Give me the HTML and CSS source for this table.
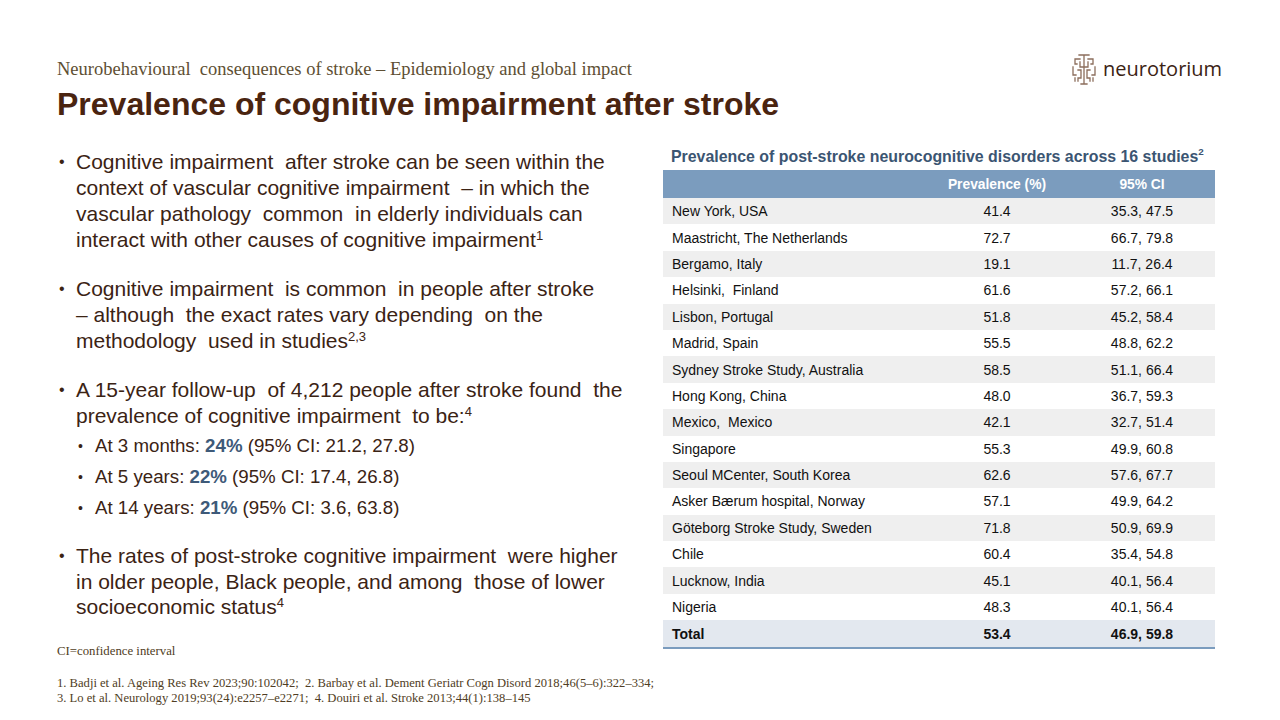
FILE: index.html
```html
<!DOCTYPE html>
<html>
<head>
<meta charset="utf-8">
<link rel="stylesheet" href="styles.css">
</head>
<body>
<div class="slide">
  <header class="header">
    <div class="kicker">Neurobehavioural&nbsp; consequences of stroke – Epidemiology and global impact</div>
    <h1 class="title">Prevalence of cognitive impairment after stroke</h1>
    <div class="logo">
      <svg class="logo-icon" viewBox="0 0 26 32" width="26" height="32">
        <g fill="none" stroke="#8c6e5c" stroke-width="1.3" stroke-linecap="square">
          <path d="M8 2 H18 M13 2 V31 M10 31 H16"/>
          <path d="M9 6 H4 V11 H6 M17 6 H22 V11 H20"/>
          <path d="M9 9 V14 H13 M17 9 V14 H13"/>
          <path d="M2 14 V22 H5 M24 14 V22 H21"/>
          <path d="M7 17 H10 V25 H7 V28 M19 17 H16 V25 H19 V28"/>
          <path d="M4 25 V28 M22 25 V28"/>
        </g>
      </svg>
      <span class="logo-text">neurotorium</span>
    </div>
  </header>

  <main class="content">
    <section class="left">
      <ul class="bullets">
        <li>Cognitive impairment&nbsp; after stroke can be seen within the<br>context of vascular cognitive impairment&nbsp; – in which the<br>vascular pathology&nbsp; common&nbsp; in elderly individuals can<br>interact with other causes of cognitive impairment<sup>1</sup></li>
        <li>Cognitive impairment&nbsp; is common&nbsp; in people after stroke<br>– although&nbsp; the exact rates vary depending&nbsp; on the<br>methodology&nbsp; used in studies<sup>2,3</sup></li>
        <li>A 15-year follow-up&nbsp; of 4,212 people after stroke found&nbsp; the<br>prevalence of cognitive impairment&nbsp; to be:<sup>4</sup>
          <ul class="sub">
            <li>At 3 months: <b>24%</b> (95% CI: 21.2, 27.8)</li>
            <li>At 5 years: <b>22%</b> (95% CI: 17.4, 26.8)</li>
            <li>At 14 years: <b>21%</b> (95% CI: 3.6, 63.8)</li>
          </ul>
        </li>
        <li class="last">The rates of post-stroke cognitive impairment&nbsp; were higher<br>in older people, Black people, and among&nbsp; those of lower<br>socioeconomic status<sup>4</sup></li>
      </ul>
      <div class="abbr">CI=confidence interval</div>
      <div class="refs">1. Badji et al. Ageing Res Rev 2023;90:102042;&nbsp; 2. Barbay et al. Dement Geriatr Cogn Disord 2018;46(5–6):322–334;<br>3. Lo et al. Neurology 2019;93(24):e2257–e2271;&nbsp; 4. Douiri et al. Stroke 2013;44(1):138–145</div>
    </section>

    <section class="right">
      <div class="table-title">Prevalence of post-stroke neurocognitive disorders across 16 studies<sup>2</sup></div>
      <table class="data">
        <thead>
          <tr><th class="c1"></th><th class="c2">Prevalence (%)</th><th class="c3">95% CI</th></tr>
        </thead>
        <tbody>
          <tr><td class="c1">New York, USA</td><td>41.4</td><td>35.3, 47.5</td></tr>
          <tr><td class="c1">Maastricht, The Netherlands</td><td>72.7</td><td>66.7, 79.8</td></tr>
          <tr><td class="c1">Bergamo, Italy</td><td>19.1</td><td>11.7, 26.4</td></tr>
          <tr><td class="c1">Helsinki,&nbsp; Finland</td><td>61.6</td><td>57.2, 66.1</td></tr>
          <tr><td class="c1">Lisbon, Portugal</td><td>51.8</td><td>45.2, 58.4</td></tr>
          <tr><td class="c1">Madrid, Spain</td><td>55.5</td><td>48.8, 62.2</td></tr>
          <tr><td class="c1">Sydney Stroke Study, Australia</td><td>58.5</td><td>51.1, 66.4</td></tr>
          <tr><td class="c1">Hong Kong, China</td><td>48.0</td><td>36.7, 59.3</td></tr>
          <tr><td class="c1">Mexico,&nbsp; Mexico</td><td>42.1</td><td>32.7, 51.4</td></tr>
          <tr><td class="c1">Singapore</td><td>55.3</td><td>49.9, 60.8</td></tr>
          <tr><td class="c1">Seoul MCenter, South Korea</td><td>62.6</td><td>57.6, 67.7</td></tr>
          <tr><td class="c1">Asker Bærum hospital, Norway</td><td>57.1</td><td>49.9, 64.2</td></tr>
          <tr><td class="c1">Göteborg Stroke Study, Sweden</td><td>71.8</td><td>50.9, 69.9</td></tr>
          <tr><td class="c1">Chile</td><td>60.4</td><td>35.4, 54.8</td></tr>
          <tr><td class="c1">Lucknow, India</td><td>45.1</td><td>40.1, 56.4</td></tr>
          <tr><td class="c1">Nigeria</td><td>48.3</td><td>40.1, 56.4</td></tr>
          <tr class="total"><td class="c1">Total</td><td>53.4</td><td>46.9, 59.8</td></tr>
        </tbody>
      </table>
    </section>
  </main>
</div>
</body>
</html>
```

FILE: styles.css
```css
* { box-sizing: border-box; }
html, body { margin: 0; padding: 0; background: #ffffff; }
.slide {
  width: 1280px;
  height: 720px;
  position: relative;
  overflow: hidden;
  font-family: "Liberation Sans", Arial, sans-serif;
}
.header {
  position: relative;
  padding: 59px 0 0 57px;
}
.kicker {
  font-family: "Liberation Serif", "Times New Roman", serif;
  font-size: 18.5px;
  line-height: 20px;
  color: #5e4f33;
}
.title {
  margin: 8px 0 0 0;
  font-size: 32px;
  line-height: 34px;
  font-weight: bold;
  color: #4a2410;
}
.logo {
  position: absolute;
  top: 53px;
  left: 1071px;
  display: flex;
  align-items: center;
  gap: 6px;
}
.logo-icon { display: block; }
.logo-text {
  font-family: "Open Sans", sans-serif;
  font-size: 20px;
  color: #3b2314;
  line-height: 30px;
}
.content {
  display: flex;
  padding-left: 57px;
  margin-top: 24px;
}
.left { width: 606px; }
.bullets {
  list-style: none;
  margin: 4px 0 0 0;
  padding: 0;
  color: #3b2314;
  font-size: 21px;
  line-height: 26px;
}
.bullets > li {
  position: relative;
  padding-left: 19px;
  margin-bottom: 23px;
  white-space: nowrap;
}
.bullets > li::before {
  content: "•";
  position: absolute;
  left: 2px;
  top: 0;
  font-size: 16px;
}
.bullets > li.last { margin-bottom: 0; line-height: 25.5px; }
sup { font-size: 0.62em; vertical-align: top; position: relative; top: -3px; line-height: 1; }
.bullets > li sup { top: 2px; }
.sub {
  list-style: none;
  margin: 5px 0 0 0;
  padding: 0;
  font-size: 18.7px;
  line-height: 24px;
}
.sub li {
  position: relative;
  padding-left: 19px;
  margin-bottom: 7px;
}
.sub li:last-child { margin-bottom: 0; }
.sub li::before {
  content: "•";
  position: absolute;
  left: 2px;
  top: 0;
  font-size: 14px;
}
.sub b { color: #3e5a79; }
.abbr {
  margin-top: 24px;
  font-family: "Liberation Serif", "Times New Roman", serif;
  font-size: 12.8px;
  line-height: 15px;
  color: #4f3d24;
}
.refs {
  margin-top: 17px;
  font-family: "Liberation Serif", "Times New Roman", serif;
  font-size: 12.6px;
  line-height: 15px;
  color: #4f3d24;
  white-space: nowrap;
}
.right {
  width: 552px;
  padding-top: 3px;
}
.table-title {
  font-size: 15.9px;
  font-weight: bold;
  color: #3b5572;
  line-height: 18px;
  padding-left: 8px;
  height: 22px;
  white-space: nowrap;
}
.table-title sup { top: -1px; color: #3b5572; }
.data {
  width: 552px;
  border-collapse: collapse;
  font-size: 14px;
  color: #111111;
  table-layout: fixed;
}
.data th {
  background: #7b9cbe;
  color: #ffffff;
  font-weight: bold;
  font-size: 13.8px;
  height: 28px;
  padding: 0;
  text-align: center;
  white-space: nowrap;
}
.data th.c1 { width: 262px; }
.data th.c2 { width: 144px; }
.data td {
  height: 26.4px;
  padding: 0;
  text-align: center;
  white-space: nowrap;
}
.data td.c1 { text-align: left; padding-left: 9px; }
.data tbody tr:nth-child(odd) td { background: #efefef; }
.data tbody tr:nth-child(even) td { background: #ffffff; }
.data tbody tr.total td {
  background: #e3e8ef;
  font-weight: bold;
  border-bottom: 2px solid #7b9cbe;
  height: 28px;
}
```
